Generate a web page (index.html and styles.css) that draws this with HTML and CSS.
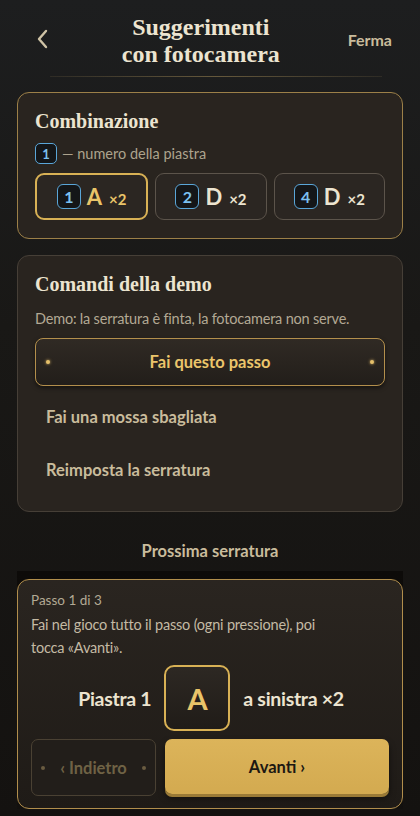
FILE: index.html
```html
<!DOCTYPE html>
<html lang="it">
	<head>
		<meta charset="UTF-8">
		<title>Suggerimenti con fotocamera</title>
		<link rel="stylesheet" href="styles.css">
	</head>
	<body>
		<div class="app">
			<header class="top">
				<button class="back" aria-label="Indietro">
					<svg width="14" height="22" viewBox="0 0 14 22"><path d="M11 3 L4 11 L11 19" fill="none" stroke="#cfc3a6" stroke-width="2.4" stroke-linecap="round" stroke-linejoin="round"/></svg>
				</button>
				<h1 class="title">Suggerimenti<br>con fotocamera</h1>
				<button class="stop">Ferma</button>
			</header>
			<div class="rule"></div>

			<section class="card card-gold">
				<h2 class="card-title">Combinazione</h2>
				<div class="legend"><span class="num">1</span> — numero della piastra</div>
				<div class="chips">
					<div class="chip chip-on"><span class="num">1</span><span class="letter">A</span><span class="times">×2</span></div>
					<div class="chip"><span class="num">2</span><span class="letter">D</span><span class="times">×2</span></div>
					<div class="chip"><span class="num">4</span><span class="letter">D</span><span class="times">×2</span></div>
				</div>
			</section>

			<section class="card card-plain">
				<h2 class="card-title">Comandi della demo</h2>
				<p class="note">Demo: la serratura è finta, la fotocamera non serve.</p>
				<button class="btn-main"><span class="dot"></span>Fai questo passo<span class="dot"></span></button>
				<button class="btn-link">Fai una mossa sbagliata</button>
				<button class="btn-link">Reimposta la serratura</button>
			</section>

			<h3 class="next">Prossima serratura</h3>

			<div class="sheet">
				<section class="card card-step">
					<div class="step-count">Passo 1 di 3</div>
					<p class="step-text">Fai nel gioco tutto il passo (ogni pressione), poi tocca «Avanti».</p>
					<div class="move">
						<span>Piastra 1</span>
						<span class="key">A</span>
						<span>a sinistra ×2</span>
					</div>
					<div class="nav">
						<button class="btn-prev"><span class="dot dim"></span>‹ Indietro<span class="dot dim"></span></button>
						<button class="btn-next">Avanti ›</button>
					</div>
				</section>
			</div>
		</div>
	</body>
</html>
```

FILE: styles.css
```css
html,
body,
h1,
h2,
h3,
p {
	margin: 0;
	padding: 0;
}

body {
	background: #151311;
	font-family: Lato, "Open Sans", sans-serif;
	color: #ece4d0;
	-webkit-font-smoothing: antialiased;
}

button {
	font-family: inherit;
	border: 0;
	background: none;
	cursor: pointer;
}

.app {
	width: 420px;
	height: 816px;
	overflow: hidden;
	background: linear-gradient(180deg, #1d1e1f 0%, #191816 40%, #141210 100%);
}

.top {
	display: flex;
	align-items: center;
	height: 76px;
	padding: 0 28px 0 30px;
}

.back {
	width: 24px;
	height: 30px;
	display: flex;
	align-items: center;
	justify-content: center;
	padding: 0;
	margin-top: 2px;
}

.title {
	flex: 1;
	text-align: center;
	font-family: "Liberation Serif", "DejaVu Serif", serif;
	font-size: 24px;
	line-height: 27px;
	font-weight: bold;
	color: #ece4d0;
	margin-top: 6px;
}

.stop {
	font-size: 16px;
	font-weight: bold;
	color: #c9bc9c;
	padding: 0;
	margin-top: 2px;
}

.rule {
	height: 1px;
	margin: 0 38px 0 50px;
	background: linear-gradient(90deg, rgba(120, 104, 70, 0.2), rgba(150, 128, 80, 0.6) 50%, rgba(120, 104, 70, 0.2));
}

.card {
	margin: 0 17px;
	border-radius: 12px;
	background: #29241f;
	box-sizing: border-box;
}

.card-gold {
	margin-top: 15px;
	border: 1px solid #9c8048;
	padding: 15px 17px 16px;
	height: 147px;
}

.card-title {
	font-family: "Liberation Serif", "DejaVu Serif", serif;
	font-size: 20px;
	font-weight: bold;
	line-height: 26px;
	color: #ece4d0;
}

.legend {
	display: flex;
	align-items: center;
	gap: 5px;
	margin-top: 9px;
	font-size: 14.5px;
	color: #ada38d;
}

.num {
	display: inline-flex;
	align-items: center;
	justify-content: center;
	width: 20px;
	height: 19px;
	border: 1.5px solid #5aa6d8;
	border-radius: 5px;
	background: #141618;
	color: #7cc0ef;
	font-size: 13px;
	font-weight: bold;
}

.chips {
	display: flex;
	gap: 7px;
	margin-top: 9px;
}

.chip {
	flex: 1;
	height: 47px;
	box-sizing: border-box;
	border: 1px solid #5c544b;
	border-radius: 9px;
	background: #2b2622;
	display: flex;
	align-items: center;
	justify-content: center;
	gap: 5px;
	color: #ece4d0;
}

.chip .num {
	width: 22px;
	height: 23px;
	font-size: 16px;
	border-width: 1.5px;
	border-radius: 6px;
}

.chip .letter {
	font-size: 22px;
	font-weight: bold;
	margin-left: 1px;
}

.chip .times {
	font-size: 15px;
	font-weight: bold;
	margin-left: 2px;
	margin-top: 4px;
}

.chip-on {
	border: 2px solid #d8b155;
	color: #e9c469;
}

.card-plain {
	margin-top: 16px;
	border: 1px solid #463f37;
	padding: 15px 17px 10px;
	height: 257px;
	display: flex;
	flex-direction: column;
}

.note {
	margin-top: 13px;
	font-size: 14.5px;
	color: #b3a994;
	letter-spacing: -0.2px;
}

.btn-main {
	margin-top: 11px;
	height: 48px;
	border: 1px solid #b38f4c;
	border-radius: 8px;
	background: linear-gradient(180deg, #302a24, #221e1a);
	box-shadow: 0 2px 4px rgba(0, 0, 0, 0.5);
	display: flex;
	align-items: center;
	justify-content: space-between;
	padding: 0 10px;
	font-size: 16.5px;
	font-weight: bold;
	color: #ebc56b;
}

.dot {
	width: 4px;
	height: 4px;
	border-radius: 50%;
	background: #e6c06a;
	box-shadow: 0 0 3px #e6c06a;
}

.dot.dim {
	background: #6a5c40;
	box-shadow: none;
}

.btn-link {
	text-align: left;
	padding: 0 11px;
	height: 53px;
	font-size: 16.5px;
	font-weight: bold;
	color: #c9bc9c;
}

.btn-main + .btn-link {
	margin-top: 4px;
}

.next {
	text-align: center;
	margin-top: 27px;
	font-size: 16.5px;
	font-weight: bold;
	color: #c9bc9c;
	line-height: 24px;
}

.sheet {
	margin: 8px 17px 0;
	padding-top: 8px;
	background: linear-gradient(180deg, #0d0b09, #12100e);
}

.card-step {
	margin: 0;
	border: 1px solid #b18e4c;
	background: linear-gradient(180deg, #2a2520, #1f1b17);
	padding: 10px 13px 11px;
	height: 230px;
}

.step-count {
	font-size: 13.5px;
	color: #b3a994;
	line-height: 20px;
}

.step-text {
	margin-top: 3px;
	font-size: 14.5px;
	line-height: 23px;
	color: #c4baa4;
	padding-right: 70px;
	letter-spacing: -0.2px;
}

.move {
	display: flex;
	align-items: center;
	justify-content: center;
	gap: 13px;
	margin-top: 6px;
	padding-left: 2px;
	font-size: 19.5px;
	font-weight: bold;
	color: #ece4d0;
	letter-spacing: -0.3px;
}

.key {
	width: 66px;
	height: 66px;
	box-sizing: border-box;
	border: 2px solid #d8b155;
	border-radius: 10px;
	background: linear-gradient(180deg, #2d2823, #201c18);
	display: flex;
	align-items: center;
	justify-content: center;
	font-size: 29px;
	color: #e9c469;
}

.nav {
	display: flex;
	gap: 9px;
	margin-top: 8px;
}

.btn-prev {
	width: 125px;
	height: 57px;
	box-sizing: border-box;
	border: 1px solid #4a4133;
	border-radius: 7px;
	background: #221e1a;
	display: flex;
	align-items: center;
	justify-content: space-between;
	padding: 0 9px;
	font-size: 16.5px;
	font-weight: bold;
	color: #6f6245;
}

.btn-next {
	flex: 1;
	height: 55px;
	border-radius: 7px;
	background: linear-gradient(180deg, #dcb45a, #d3aa50);
	box-shadow: 0 3px 0 #9a7a36, 0 4px 6px rgba(0, 0, 0, 0.5);
	font-size: 16.5px;
	font-weight: bold;
	color: #1c1712;
}
```
